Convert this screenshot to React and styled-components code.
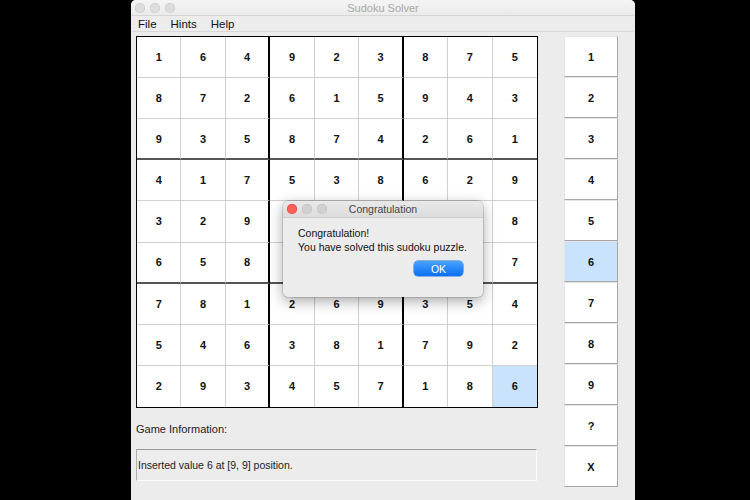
import React from "react";
import styled, { createGlobalStyle } from "styled-components";

const Global = createGlobalStyle`
  html, body { margin: 0; padding: 0; background: #000; }
  body { width: 750px; height: 500px; overflow: hidden; font-family: "Liberation Sans", Arial, sans-serif; }
`;

const Page = styled.div`
  display: flex;
  padding-left: 131px;
  height: 500px;
`;

const Window = styled.div`
  position: relative;
  width: 504px;
  height: 500px;
  background: #ececec;
  border-radius: 5px 5px 0 0;
  display: flex;
  flex-direction: column;
  overflow: hidden;
`;

const TitleBar = styled.div`
  position: relative;
  height: 15px;
  flex: none;
  background: linear-gradient(#f4f4f4, #ebebeb);
  border-bottom: 1px solid #d6d6d6;
  display: flex;
  align-items: center;
  justify-content: center;
  font-size: 11px;
  color: #a8a8a8;
`;

const Lights = styled.div`
  position: absolute;
  left: 4px;
  top: 3px;
  display: flex;
  gap: 5px;
`;

const Light = styled.span`
  width: 10px;
  height: 10px;
  border-radius: 50%;
  background: ${(p) => p.$color};
  box-shadow: inset 0 0 0 0.5px ${(p) => p.$edge};
`;

const MenuBar = styled.div`
  height: 15px;
  flex: none;
  display: flex;
  align-items: center;
  gap: 14px;
  padding-left: 7px;
  font-size: 11.5px;
  color: #111;
  background: #ececec;
  border-bottom: 1px solid #d8d8d8;
`;

const Content = styled.div`
  display: flex;
  padding: 4px 0 0 5px;
  gap: 26px;
`;

const LeftCol = styled.div`
  display: flex;
  flex-direction: column;
`;

const Board = styled.div`
  width: 402px;
  height: 372px;
  box-sizing: border-box;
  border: 1px solid #000;
  display: grid;
  grid-template-columns: repeat(9, 1fr);
  grid-template-rows: repeat(9, 1fr);
  background: #fff;
`;

const Cell = styled.div`
  box-sizing: border-box;
  display: flex;
  align-items: center;
  justify-content: center;
  font-weight: bold;
  font-size: 11px;
  color: #111;
  background: ${(p) => (p.$selected ? "#c9e3fc" : "#fff")};
  border-right: ${(p) =>
    p.$col === 8 ? "none" : p.$col % 3 === 2 ? "2px solid #000" : "1px solid #cfcfcf"};
  border-bottom: ${(p) =>
    p.$row === 8 ? "none" : p.$row % 3 === 2 ? "2px solid #555" : "1px solid #cfcfcf"};
`;

const InfoLabel = styled.div`
  font-size: 11px;
  color: #222;
  margin-top: 14px;
  height: 14px;
  line-height: 14px;
`;

const InfoField = styled.div`
  margin-top: 13px;
  width: 401px;
  height: 32px;
  box-sizing: border-box;
  border-top: 1px solid #9a9a9a;
  border-left: 1px solid #b0b0b0;
  border-right: 1px solid #fafafa;
  border-bottom: 1px solid #fafafa;
  display: flex;
  align-items: center;
  padding-left: 1px;
  font-size: 10.5px;
  color: #222;
`;

const RightCol = styled.div`
  display: flex;
  flex-direction: column;
  width: 54px;
`;

const NumButton = styled.div`
  height: 41px;
  box-sizing: border-box;
  display: flex;
  align-items: center;
  justify-content: center;
  font-weight: bold;
  font-size: 11px;
  color: #111;
  background: ${(p) => (p.$active ? "#c9e3fc" : "#fff")};
  border-top: 1px solid #e4e4e4;
  border-left: 1px solid #e4e4e4;
  border-right: 1px solid #a6a6a6;
  border-bottom: 1px solid #a6a6a6;
`;

const Dialog = styled.div`
  position: absolute;
  left: 152px;
  top: 201px;
  width: 200px;
  height: 96px;
  background: #ececec;
  border-radius: 5px;
  box-shadow: 0 4px 14px rgba(0, 0, 0, 0.35), 0 0 0 0.5px rgba(0, 0, 0, 0.25);
  display: flex;
  flex-direction: column;
  overflow: hidden;
`;

const DialogTitle = styled.div`
  position: relative;
  height: 16px;
  flex: none;
  background: linear-gradient(#e9e9e9, #dcdcdc);
  border-bottom: 1px solid #cfcfcf;
  display: flex;
  align-items: center;
  justify-content: center;
  font-size: 10.5px;
  color: #444;
`;

const DialogBody = styled.div`
  display: flex;
  flex-direction: column;
  padding: 8px 0 0 15px;
  font-size: 10.5px;
  color: #111;
  line-height: 14px;
  white-space: nowrap;
`;

const OkRow = styled.div`
  display: flex;
  justify-content: flex-end;
  padding-right: 20px;
  margin-top: 7px;
`;

const OkButton = styled.div`
  width: 49px;
  height: 15px;
  border-radius: 4px;
  background: linear-gradient(#4aa3ff, #0a6ff5);
  box-shadow: 0 0 0 0.5px #2a6fd0;
  color: #fff;
  font-size: 10.5px;
  display: flex;
  align-items: center;
  justify-content: center;
`;

const board = [
  [1, 6, 4, 9, 2, 3, 8, 7, 5],
  [8, 7, 2, 6, 1, 5, 9, 4, 3],
  [9, 3, 5, 8, 7, 4, 2, 6, 1],
  [4, 1, 7, 5, 3, 8, 6, 2, 9],
  [3, 2, 9, 7, 4, 6, 1, 5, 8],
  [6, 5, 8, 1, 9, 2, 4, 3, 7],
  [7, 8, 1, 2, 6, 9, 3, 5, 4],
  [5, 4, 6, 3, 8, 1, 7, 9, 2],
  [2, 9, 3, 4, 5, 7, 1, 8, 6],
];

const buttons = ["1", "2", "3", "4", "5", "6", "7", "8", "9", "?", "X"];

export default function App() {
  return (
    <>
      <Global />
      <Page>
        <Window>
          <TitleBar>
            <Lights>
              <Light $color="#dcdcdc" $edge="#c8c8c8" />
              <Light $color="#dcdcdc" $edge="#c8c8c8" />
              <Light $color="#dcdcdc" $edge="#c8c8c8" />
            </Lights>
            Sudoku Solver
          </TitleBar>
          <MenuBar>
            <span>File</span>
            <span>Hints</span>
            <span>Help</span>
          </MenuBar>
          <Content>
            <LeftCol>
              <Board>
                {board.map((row, r) =>
                  row.map((v, c) => (
                    <Cell key={`${r}-${c}`} $row={r} $col={c} $selected={r === 8 && c === 8}>
                      {v}
                    </Cell>
                  ))
                )}
              </Board>
              <InfoLabel>Game Information:</InfoLabel>
              <InfoField>Inserted value 6 at [9, 9] position.</InfoField>
            </LeftCol>
            <RightCol>
              {buttons.map((b) => (
                <NumButton key={b} $active={b === "6"}>
                  {b}
                </NumButton>
              ))}
            </RightCol>
          </Content>
          <Dialog>
            <DialogTitle>
              <Lights>
                <Light $color="#fc5f57" $edge="#e0443e" />
                <Light $color="#d0d0d0" $edge="#bdbdbd" />
                <Light $color="#d0d0d0" $edge="#bdbdbd" />
              </Lights>
              Congratulation
            </DialogTitle>
            <DialogBody>
              <span>Congratulation!</span>
              <span>You have solved this sudoku puzzle.</span>
            </DialogBody>
            <OkRow>
              <OkButton>OK</OkButton>
            </OkRow>
          </Dialog>
        </Window>
      </Page>
    </>
  );
}
